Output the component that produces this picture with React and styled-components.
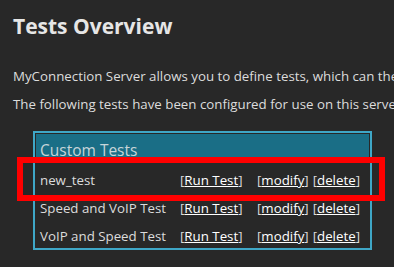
import React from 'react';
import styled, { createGlobalStyle } from 'styled-components';

const GlobalStyle = createGlobalStyle`
  html, body {
    margin: 0;
    padding: 0;
    background: #282828;
  }
  body {
    font-family: 'Open Sans', 'Noto Sans', sans-serif;
    color: #dcdcdc;
    overflow: hidden;
  }
`;

const Page = styled.div`
  position: relative;
  width: 394px;
  height: 267px;
  padding: 13px 0 0 13px;
  box-sizing: border-box;
  white-space: nowrap;
  overflow: hidden;
`;

const Title = styled.h1`
  margin: 0;
  font-size: 21px;
  line-height: 26px;
  font-weight: 700;
  color: #e6e6e6;
`;

const Para = styled.p`
  margin: 0;
  font-size: 13.3px;
  line-height: 28px;
  margin-top: ${(p) => p.$top || 0}px;
`;

const Panel = styled.div`
  margin: 13px 0 0 20px;
  width: 339px;
  border: 2px solid #3fa7c7;
  padding: 1px;
  box-sizing: border-box;
`;

const Header = styled.div`
  background: #1a6e86;
  height: 28px;
  line-height: 32px;
  padding-left: 4px;
  font-size: 15.5px;
  color: #c7d5d9;
  margin-bottom: 1px;
`;

const Row = styled.div`
  display: grid;
  grid-template-columns: 140px 77px 1fr;
  height: 28px;
  line-height: 34px;
  font-size: 13.3px;
  padding-left: 4px;
`;

const Cell = styled.div`
  display: flex;
  gap: 4px;
`;

const Link = styled.a`
  color: #ffffff;
  text-decoration: underline;
  cursor: pointer;
`;

const Highlight = styled.div`
  position: absolute;
  left: 17px;
  top: 157px;
  width: 368px;
  height: 44px;
  border: 6px solid #ff0000;
  box-sizing: border-box;
  pointer-events: none;
`;

const tests = ['new_test', 'Speed and VoIP Test', 'VoIP and Speed Test'];

const Bracketed = ({ children }) => (
  <span>
    [<Link>{children}</Link>]
  </span>
);

export default function App() {
  return (
    <>
      <GlobalStyle />
      <Page>
        <Title>Tests Overview</Title>
        <Para $top={23}>MyConnection Server allows you to define tests, which can then be used.</Para>
        <Para>The following tests have been configured for use on this server.</Para>
        <Panel>
          <Header>Custom Tests</Header>
          {tests.map((name) => (
            <Row key={name}>
              <span>{name}</span>
              <span>
                <Bracketed>Run Test</Bracketed>
              </span>
              <Cell>
                <Bracketed>modify</Bracketed>
                <Bracketed>delete</Bracketed>
              </Cell>
            </Row>
          ))}
        </Panel>
        <Highlight />
      </Page>
    </>
  );
}
